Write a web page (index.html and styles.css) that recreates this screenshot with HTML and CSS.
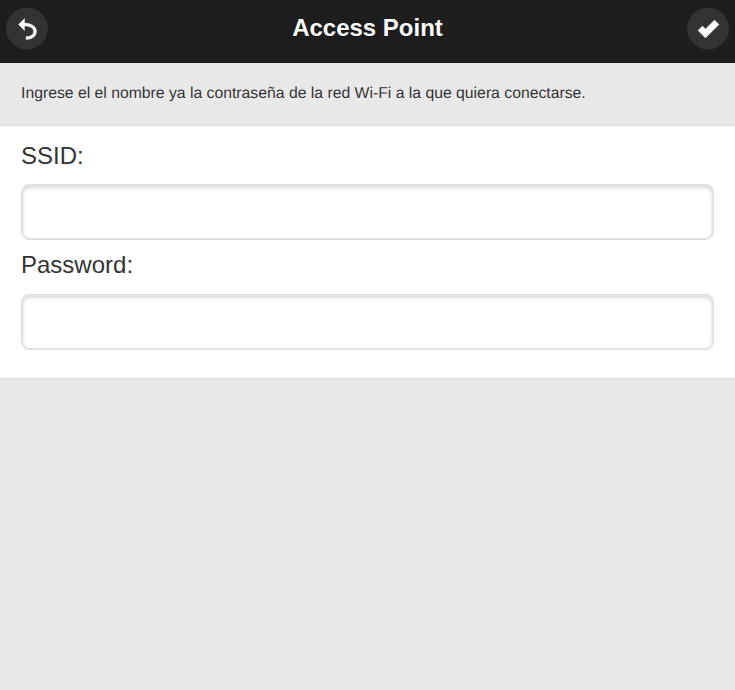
FILE: index.html
```html
<!DOCTYPE html>
<html lang="es">
<head>
<meta charset="utf-8">
<title>Access Point</title>
<link rel="stylesheet" href="styles.css">
</head>
<body>
<header class="header">
  <button class="icon-button" type="button" aria-label="Volver">
    <svg class="icon-back" viewBox="0 0 14 14"><path d="M5,3V0L1,4l4,4V5c3,0,6,1,6,3.5S9,12,6,12v2c4,0,7-2,7-5.5S9,3,5,3z"/></svg>
  </button>
  <h1 class="title">Access Point</h1>
  <button class="icon-button" type="button" aria-label="Aceptar">
    <svg class="icon-check" viewBox="0 0 14 14"><path d="M14,4 11,1 5,7 3,5 0,8 5,13z"/></svg>
  </button>
</header>
<p class="intro">Ingrese el el nombre ya la contraseña de la red Wi-Fi a la que quiera conectarse.</p>
<form class="form">
  <label class="label" for="ssid">SSID:</label>
  <input class="input" id="ssid" type="text">
  <label class="label" for="password">Password:</label>
  <input class="input" id="password" type="password">
</form>
</body>
</html>
```
FILE: styles.css
```css
* { box-sizing: border-box; }
body {
  margin: 0;
  background: #e8e8e8;
  color: #333;
  font-family: "Liberation Sans", Arial, sans-serif;
}
.header {
  display: flex;
  align-items: flex-start;
  justify-content: space-between;
  height: 63px;
  padding: 7px 6px 0;
  background: #1d1d1d;
  border-bottom: 1px solid #171717;
}
.icon-button {
  display: flex;
  align-items: center;
  justify-content: center;
  width: 42px;
  height: 42px;
  padding: 0;
  border: 0;
  border-radius: 50%;
  background: #333;
  transform: translateY(.5px);
}
.icon-button svg { width: 21px; height: 21px; fill: #fff; overflow: visible; }
.icon-back { stroke: #fff; stroke-width: .25; }
.icon-check { margin-left: 1px; stroke: #fff; stroke-width: .2; }
.title {
  margin: 0;
  color: #fff;
  font-size: 24px;
  line-height: 42px;
  text-shadow: 0 1px 0 #111;
}
.intro {
  margin: 0;
  height: 62px;
  padding: 0 21px;
  font-size: 15.75px;
  line-height: 62px;
  text-rendering: geometricPrecision;
  text-shadow: 0 1px 0 #f3f3f3;
}
.form {
  display: flex;
  flex-direction: column;
  height: 254px;
  padding: 16px 21px 0;
  background: #fff;
  border: solid #ddd;
  border-width: 1px 0;
}
.label {
  height: 42px;
  font-size: 24px;
  line-height: 28px;
}
.input {
  height: 56px;
  margin: 0 0 11px;
  padding: 0 12px;
  border: 1px solid #ddd;
  border-radius: 8px;
  background: #fff;
  box-shadow: inset 0 0 0 1px #e6e6e6, inset 0 2px 5px rgba(0, 0, 0, .2);
  font: inherit;
  font-size: 24px;
  outline: 0;
}
.input + .label { height: 43px; }
```
